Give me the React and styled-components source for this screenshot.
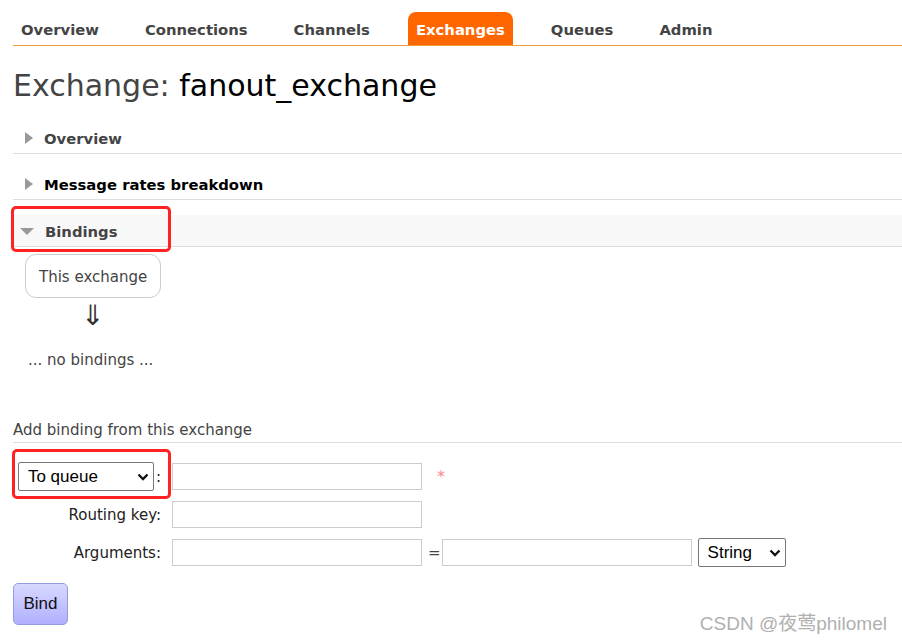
import React from "react";
import styled, { createGlobalStyle } from "styled-components";

const GlobalStyle = createGlobalStyle`
  body {
    margin: 0;
    background: #ffffff;
    font-family: "DejaVu Sans", Verdana, sans-serif;
    font-size: 15px;
    color: #444444;
  }
`;

const tabs = ["Overview", "Connections", "Channels", "Exchanges", "Queues", "Admin"];

const Page = styled.div`
  position: relative;
  min-height: 643px;
  padding: 12px 0 0 13px;
  box-sizing: border-box;
`;

const Nav = styled.ul`
  display: flex;
  gap: 30px;
  margin: 0;
  padding: 0;
  list-style: none;
  border-bottom: 1px solid #f59a3a;
`;

const Tab = styled.li`
  height: 33px;
  line-height: 35px;
  padding: 0 8px;
  font-weight: bold;
  font-size: 14.8px;
  color: ${(p) => (p.$active ? "#ffffff" : "#444444")};
  background: ${(p) => (p.$active ? "#ff6600" : "transparent")};
  border-radius: 8px 8px 0 0;
`;

const Title = styled.h1`
  margin: 22px 0 0;
  font-size: 30px;
  line-height: 36px;
  font-weight: normal;
  color: #444444;

  b {
    font-weight: normal;
    color: #000000;
  }
`;

const Section = styled.div`
  margin-top: ${(p) => p.$top || 15}px;
`;

const SectionHead = styled.div`
  display: flex;
  align-items: center;
  height: 30px;
  padding-top: 1px;
  border-bottom: 1px solid #dddddd;
  background: ${(p) => (p.$open ? "#f8f8f8" : "transparent")};
  font-weight: bold;
  font-size: 14.8px;
  color: ${(p) => (p.$dark ? "#000000" : "#444444")};
`;

const Arrow = styled.span`
  display: inline-block;
  width: 0;
  height: 0;
  margin-right: 11px;
  margin-left: ${(p) => (p.$open ? 7 : 12)}px;
  border-style: solid;
  border-color: transparent;
  ${(p) =>
    p.$open
      ? `border-width: 7px 7px 0 7px; border-top-color: #999999;`
      : `border-width: 6px 0 6px 8px; border-left-color: #999999;`}
`;

const BindingsBody = styled.div`
  padding: 7px 0 0 12px;
`;

const ExchangeBox = styled.div`
  display: inline-block;
  padding: 13px 13px 11px 13px;
  border: 1px solid #cccccc;
  border-radius: 11px;
  line-height: 18px;
`;

const DownArrow = styled.div`
  width: 136px;
  text-align: center;
  font-size: 28px;
  line-height: 30px;
  margin-top: 3px;
  color: #333333;
`;

const Empty = styled.p`
  margin: 19px 0 0 3px;
  line-height: 20px;
`;

const SubHead = styled.div`
  margin-top: 51px;
  padding-bottom: 3px;
  border-bottom: 1px solid #dddddd;
  line-height: 18px;
`;

const Form = styled.div`
  display: grid;
  grid-template-columns: 159px auto;
  row-gap: 10px;
  align-items: center;
  margin-top: 19px;
`;

const Label = styled.div`
  display: flex;
  justify-content: flex-end;
  align-items: center;
  padding-right: 11px;
  color: #222222;
`;

const Colon = styled.span`
  margin-left: 2px;
`;

const Cell = styled.div`
  display: flex;
  align-items: center;
`;

const TextInput = styled.input`
  width: 250px;
  height: 27px;
  box-sizing: border-box;
  border: 1px solid #cccccc;
  border-radius: 0;
  margin: 0;
  padding: 0 4px;
`;

const SelectWrap = styled.div`
  position: relative;
  display: inline-flex;
  margin-left: ${(p) => p.$ml || 0}px;
`;

const Select = styled.select`
  -webkit-appearance: none;
  appearance: none;
  width: ${(p) => p.$w}px;
  height: 29px;
  box-sizing: border-box;
  border: 1px solid #767676;
  border-radius: 2px;
  background: #ffffff;
  padding: 0 0 0 9px;
  font-family: "Liberation Sans", Arial, sans-serif;
  font-size: 17px;
  color: #000000;
`;

const Chevron = styled.svg`
  position: absolute;
  right: 5px;
  top: 11px;
  pointer-events: none;
`;

const Required = styled.span`
  margin-left: 15px;
  color: #f88888;
  font-size: 16px;
`;

const Equals = styled.span`
  margin: 0 1px 0 6px;
  color: #444444;
`;

const BindButton = styled.button`
  margin-top: 16px;
  width: 55px;
  height: 42px;
  border: 1px solid #9999dd;
  border-radius: 5px;
  background: linear-gradient(#d8d8ff, #b0b0ff);
  font-family: "Liberation Sans", Arial, sans-serif;
  font-size: 17px;
  color: #111111;
`;

const Highlight = styled.div`
  position: absolute;
  border: 3px solid #ff2222;
  border-radius: 5px;
  pointer-events: none;
`;

const Watermark = styled.div`
  position: absolute;
  right: 15px;
  bottom: 8px;
  font-family: "Liberation Sans", "Noto Sans CJK SC", sans-serif;
  font-size: 19px;
  color: #b0b0b0;
`;

const ChevronIcon = () => (
  <Chevron width="12" height="8" viewBox="0 0 12 8">
    <path d="M1.5 1.5 L6 6 L10.5 1.5" fill="none" stroke="#111" strokeWidth="2.3" />
  </Chevron>
);

const App = () => {
  return (
    <>
      <GlobalStyle />
      <Page>
        <Nav>
          {tabs.map((t) => (
            <Tab key={t} $active={t === "Exchanges"}>
              {t}
            </Tab>
          ))}
        </Nav>

        <Title>
          Exchange: <b>fanout_exchange</b>
        </Title>

        <Section $top={18}>
          <SectionHead>
            <Arrow />
            Overview
          </SectionHead>
        </Section>

        <Section $top={14}>
          <SectionHead $dark>
            <Arrow />
            Message rates breakdown
          </SectionHead>
        </Section>

        <Section $top={15}>
          <SectionHead $open>
            <Arrow $open />
            Bindings
          </SectionHead>
          <BindingsBody>
            <ExchangeBox>This exchange</ExchangeBox>
            <DownArrow>⇓</DownArrow>
            <Empty>... no bindings ...</Empty>
          </BindingsBody>
        </Section>

        <SubHead>Add binding from this exchange</SubHead>

        <Form>
          <Label>
            <SelectWrap>
              <Select $w={136} defaultValue="queue">
                <option value="queue">To queue</option>
                <option value="exchange">To exchange</option>
              </Select>
              <ChevronIcon />
            </SelectWrap>
            <Colon>:</Colon>
          </Label>
          <Cell>
            <TextInput />
            <Required>*</Required>
          </Cell>

          <Label>Routing key:</Label>
          <Cell>
            <TextInput />
          </Cell>

          <Label>Arguments:</Label>
          <Cell>
            <TextInput />
            <Equals>=</Equals>
            <TextInput />
            <SelectWrap $ml={6}>
              <Select $w={88} defaultValue="string">
                <option value="string">String</option>
                <option value="number">Number</option>
                <option value="list">List</option>
              </Select>
              <ChevronIcon />
            </SelectWrap>
          </Cell>
        </Form>

        <BindButton>Bind</BindButton>

        <Highlight style={{ left: 11, top: 206, width: 154, height: 40 }} />
        <Highlight style={{ left: 12, top: 449, width: 153, height: 44 }} />

        <Watermark>CSDN @夜莺philomel</Watermark>
      </Page>
    </>
  );
};

export default App;
